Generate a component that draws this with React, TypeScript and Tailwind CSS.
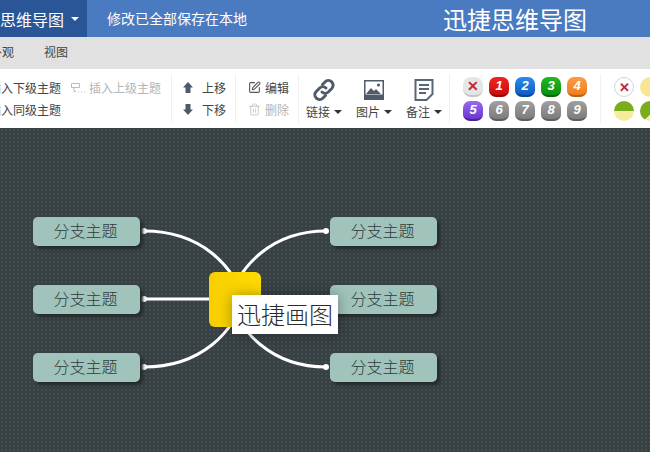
import { SquarePen, Trash2 } from "lucide-react"

const font = "font-['Noto_Sans_CJK_SC',sans-serif]"

const badges = [
  { label: "1", bg: "bg-gradient-to-b from-[#f42222] to-[#c80c0c] border-b-[#960606]" },
  { label: "2", bg: "bg-gradient-to-b from-[#2a8cf0] to-[#0c5cc4] border-b-[#084594]" },
  { label: "3", bg: "bg-gradient-to-b from-[#22b822] to-[#0a900a] border-b-[#066a06]" },
  { label: "4", bg: "bg-gradient-to-b from-[#fb9c44] to-[#ee7e1c] border-b-[#bb6012]" },
]

const grays = ["6", "7", "8", "9"]

const branches = [
  { left: "left-[33px]", top: "top-[89px]" },
  { left: "left-[33px]", top: "top-[157px]" },
  { left: "left-[33px]", top: "top-[225px]" },
  { left: "left-[330px]", top: "top-[89px]" },
  { left: "left-[330px]", top: "top-[157px]" },
  { left: "left-[330px]", top: "top-[225px]" },
]

function Badge({ label, bg }: { label: string; bg: string }) {
  return (
    <div className={`flex h-5 w-5 items-center justify-center rounded-[7px] border-b-2 text-[13px] font-bold italic text-white font-['Liberation_Sans',sans-serif] ${bg}`}>
      {label}
    </div>
  )
}

function Caret() {
  return <span className="ml-1 inline-block border-x-[4px] border-t-[4px] border-x-transparent border-t-[#333]" />
}

function BigTool({ label, width, children }: { label: string; width: string; children: React.ReactNode }) {
  return (
    <div className={`flex flex-col items-center ${width}`}>
      <div className="flex h-[24px] items-center">{children}</div>
      <div className="mt-[2px] flex items-center text-[12px] leading-[16px] text-[#444]">
        {label}
        <Caret />
      </div>
    </div>
  )
}

function Divider() {
  return <div className="my-[5px] w-px shrink-0 bg-[#f0f0f0]" />
}

function MoveArrow({ down }: { down?: boolean }) {
  return (
    <svg width="10" height="11" viewBox="0 0 10 11" fill="#4f5a6b" className={down ? "rotate-180" : ""}>
      <path d="M5 0l5 5.500H7.500V11h-5V5.500H0z" />
    </svg>
  )
}

export default function App() {
  return (
    <div className={`flex h-[452px] w-[650px] flex-col overflow-hidden ${font}`}>
      {/* title bar */}
      <div className="flex h-[37px] shrink-0 items-center bg-[#4a7abf] text-white">
        <div className="flex h-full w-[87px] shrink-0 items-center justify-end overflow-hidden bg-[#2a5596] pr-[8px]">
          <span className="whitespace-nowrap text-[16px]">迅捷思维导图</span>
          <span className="ml-[7px] inline-block border-x-[4px] border-t-[4px] border-x-transparent border-t-white" />
        </div>
        <span className="ml-[20px] text-[14px]">修改已全部保存在本地</span>
        <span className="ml-[196px] whitespace-nowrap text-[24px] leading-[32px]">迅捷思维导图</span>
      </div>

      {/* tabs */}
      <div className="flex h-[32px] shrink-0 items-center bg-[#e1e1e1] pb-[3px] text-[12px] text-[#444]">
        <span className="-ml-[10px] w-[54px] shrink-0">外观</span>
        <span>视图</span>
      </div>

      {/* toolbar */}
      <div className="flex h-[59px] shrink-0 overflow-hidden bg-white text-[12px] text-[#444]">
        <div className="-ml-[11px] flex w-[182px] shrink-0 flex-col justify-center gap-[6px] leading-[16px]">
          <div className="flex items-center">
            <span className="w-[82px]">插入下级主题</span>
            <svg className="ml-[-1px] mr-[4px] text-[#bbb]" width="15" height="12" viewBox="0 0 15 12" fill="none" stroke="currentColor">
              <path d="M1.500 1.500h8v4h-8zM4 5.500v4h2M8 10h1M11 10h1M14 10h1" />
            </svg>
            <span className="text-[#b5b5b5]">插入上级主题</span>
          </div>
          <span>插入同级主题</span>
        </div>
        <Divider />
        <div className="flex w-[63px] shrink-0 flex-col justify-center gap-[6px] pl-[11px] leading-[16px]">
          <div className="flex items-center gap-[9px]">
            <MoveArrow />
            上移
          </div>
          <div className="flex items-center gap-[9px]">
            <MoveArrow down />
            下移
          </div>
        </div>
        <Divider />
        <div className="flex w-[62px] shrink-0 flex-col justify-center gap-[6px] pl-[12px] leading-[16px]">
          <div className="flex items-center gap-[4px]">
            <SquarePen size={13} className="text-[#555]" />
            编辑
          </div>
          <div className="flex items-center gap-[4px] text-[#b5b5b5]">
            <Trash2 size={13} strokeWidth={1.25} />
            删除
          </div>
        </div>
        <Divider />
        <div className="flex w-[150px] shrink-0 pt-[9px]">
          <BigTool label="链接" width="w-[50px]">
            <svg width="24" height="24" viewBox="0 0 24 24" fill="none" stroke="#4f5a6b" strokeWidth="3" strokeLinecap="round">
              <path d="M10.500 6.500l2.500-2.500a4.600 4.600 0 0 1 6.800 6.500l-3.500 3.500a4.600 4.600 0 0 1-6.300 0" />
              <path d="M13.500 17.500l-2.500 2.500a4.600 4.600 0 0 1-6.800-6.500l3.500-3.500a4.600 4.600 0 0 1 6.300 0" />
            </svg>
          </BigTool>
          <BigTool label="图片" width="w-[50px]">
            <svg width="20" height="20" viewBox="0 0 20 20">
              <path d="M0 0h20v20H0z" fill="#4f5a6b" />
              <path d="M1.500 1.500h17v13h-17z" fill="#fff" />
              <path d="M2 14l5-6 3 3 2-2 5 5z" fill="#4f5a6b" />
              <circle cx="14.500" cy="5" r="1.600" fill="#4f5a6b" />
            </svg>
          </BigTool>
          <BigTool label="备注" width="w-[50px]">
            <svg width="20" height="22" viewBox="0 0 20 22" fill="none" stroke="#5a6577" strokeWidth="2">
              <path d="M1.500 1h17v14l-6 6h-11z" />
              <path d="M5 6h10M5 10h10M5 14h7" />
            </svg>
          </BigTool>
        </div>
        <Divider />
        <div className="flex w-[150px] shrink-0 flex-col justify-center gap-[4px] pl-[13px]">
          <div className="flex gap-[6px]">
            <div className="flex h-5 w-5 items-center justify-center rounded-[8px] border-b-2 border-b-[#c4c4c4] bg-[#e6e6e6] text-[14px] font-bold text-[#c0273a]">✕</div>
            {badges.map((b) => (
              <Badge key={b.label} label={b.label} bg={b.bg} />
            ))}
          </div>
          <div className="flex gap-[6px]">
            <Badge label="5" bg="bg-gradient-to-b from-[#9a68ee] to-[#6a36d0] border-b-[#4b2399]" />
            {grays.map((g) => (
              <Badge key={g} label={g} bg="bg-gradient-to-b from-[#a0a0a0] to-[#7c7c7c] border-b-[#5e5e5e]" />
            ))}
          </div>
        </div>
        <Divider />
        <div className="flex shrink-0 flex-col justify-center gap-[4px] pl-[13px]">
          <div className="flex gap-[6px]">
            <div className="flex h-5 w-5 items-center justify-center rounded-full border border-[#cfd8d4] bg-white text-[13px] font-bold text-[#c0273a]">✕</div>
            <div className="h-5 w-5 rounded-full bg-[#fae594]" />
          </div>
          <div className="flex gap-[6px]">
            <div className="h-5 w-5 rounded-full bg-[linear-gradient(#7aad1c_50%,#f6ec9c_50%)]" />
            <div className="h-5 w-5 rounded-full bg-[linear-gradient(135deg,#7aad1c_60%,#f6ec9c_60%)]" />
          </div>
        </div>
      </div>

      {/* canvas */}
      <div className="relative flex-1 bg-[#374042] bg-[radial-gradient(#434d4f_1px,transparent_1px)] bg-[length:4px_4px]">
        <svg className="absolute left-0 top-0" width="650" height="324" viewBox="0 128 650 324" fill="none" stroke="#fff" strokeWidth="3">
          <path d="M144 231C200 231 235 265 245 305" />
          <path d="M144 299H235" />
          <path d="M144 367C200 367 235 333 245 293" />
          <path d="M326 231C273 231 238 265 228 305" />
          <path d="M326 367C273 367 238 333 228 293" />
          <g fill="#fff" stroke="none">
            <circle cx="144" cy="231" r="3" />
            <circle cx="144" cy="299" r="3" />
            <circle cx="144" cy="367" r="3" />
            <circle cx="326" cy="231" r="3" />
            <circle cx="326" cy="367" r="3" />
          </g>
        </svg>
        {branches.map((n, i) => (
          <div
            key={i}
            className={`absolute flex h-[29px] w-[107px] items-center justify-center rounded-[5px] bg-[#a0c4bb] pb-[3px] pr-[2px] text-[16px] font-light text-[#2f3b3b] shadow-[3px_3px_3px_#262c2e] ${n.left} ${n.top}`}
          >
            分支主题
          </div>
        ))}
        <div className="absolute left-[209px] top-[144px] h-[55px] w-[52px] rounded-[6px] bg-gradient-to-r from-[#f7cf00] to-[#ffdc00]" />
        <div className="absolute left-[232px] top-[167px] flex h-[39px] w-[106px] items-center justify-center bg-white pb-[2px] text-[24px] font-light text-[#2b2b2b] shadow-[0_0_14px_rgba(0,0,0,0.35)]">
          迅捷画图
        </div>
      </div>
    </div>
  )
}
